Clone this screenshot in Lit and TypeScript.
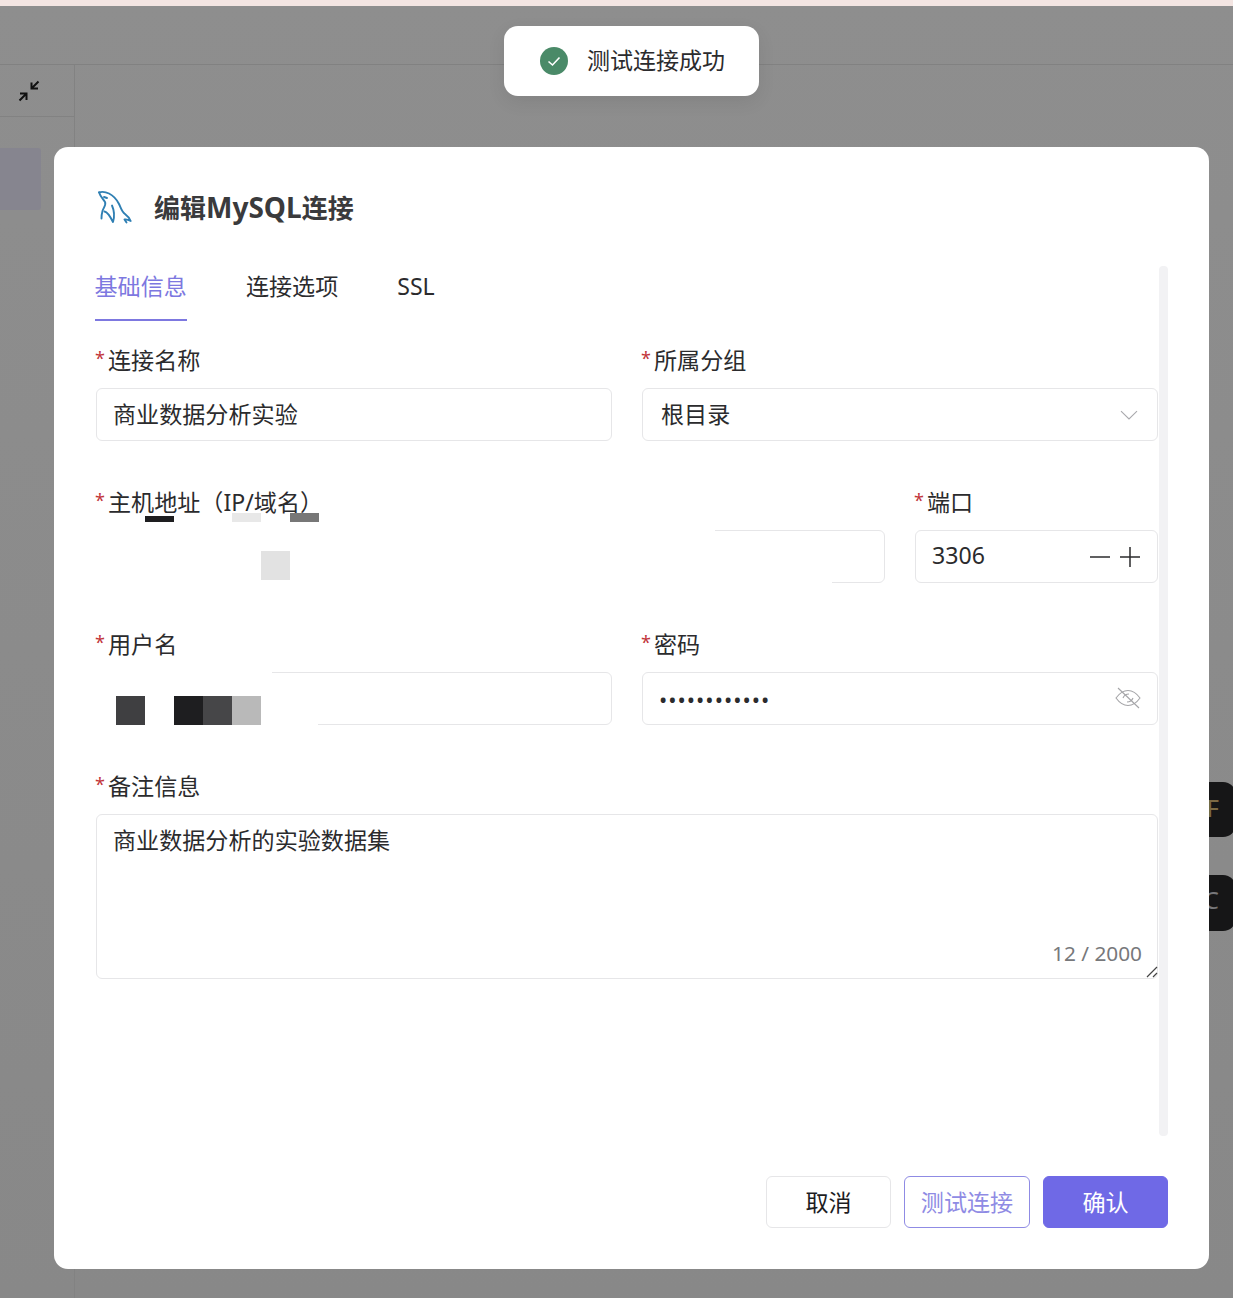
import { LitElement, html, css, svg } from 'lit';
import { customElement } from 'lit/decorators.js';

type Block = { x: number; y: number; w: number; h: number; c: string };

// mosaic over the masked host / user values, coordinates relative to the field
const hostBlocks: Block[] = [
  { x: -2, y: 40, w: 621, h: 56, c: '#fff' },
  { x: 619, y: 60, w: 117, h: 36, c: '#fff' },
  { x: 49, y: 28, w: 29, h: 6, c: '#1e1e20' },
  { x: 136, y: 25, w: 29, h: 9, c: '#e8e8e8' },
  { x: 194, y: 25, w: 29, h: 9, c: '#777' },
  { x: 165, y: 63, w: 29, h: 29, c: '#e2e2e2' },
];
const userBlocks: Block[] = [
  { x: -2, y: 40, w: 178, h: 56, c: '#fff' },
  { x: 176, y: 60, w: 46, h: 36, c: '#fff' },
  { x: 20, y: 66, w: 29, h: 29, c: '#3f3f41' },
  { x: 78, y: 66, w: 29, h: 29, c: '#1e1e20' },
  { x: 107, y: 66, w: 29, h: 29, c: '#464648' },
  { x: 136, y: 66, w: 29, h: 29, c: '#b9b9b9' },
];

const mosaic = (blocks: Block[]) =>
  blocks.map(
    (b) => html`<i class="px" style="left:${b.x}px;top:${b.y}px;width:${b.w}px;height:${b.h}px;background:${b.c}"></i>`
  );

const collapseIcon = svg`<svg class="collapse" viewBox="0 0 22 22" fill="none" stroke="#111" stroke-width="2"><path d="M20.5 1.5 13.5 8.5M13.5 2.5V8.5H20"/><path d="M1.5 20.5 8.5 13.5M2 13.5H8.5V20"/></svg>`;

const dolphin = svg`<svg class="dolphin" viewBox="0 0 36 36" fill="none" stroke="#2f7fb3" stroke-width="1.9" stroke-linecap="round" stroke-linejoin="round">
  <path d="M2 3.3C5 2.500 9 3 12 4.500C17 7 20 11 22 15C24 19 25 23 28 25C30 26.500 32 28 33.700 32C31 30.500 29.500 30 27.500 30.500L29.500 33.500"/>
  <path d="M2 3.300C3 7 6 10 8 13C9.500 16 6.500 18.500 5.500 22C4.800 24.500 4.500 27 4.500 29.500"/>
  <path d="M7.500 22.500C10 23 12.500 26 16 33C17.500 28 17 21 15 16.500"/>
  <path d="M7 8 10 9"/>
</svg>`;

const chevron = svg`<svg class="chevron" viewBox="0 0 18 10" fill="none" stroke="#a9a9ad" stroke-width="1.1"><path d="M1 1.2 9 9 17 1.2"/></svg>`;

const eyeOff = svg`<svg class="eye" viewBox="0 0 26 22" fill="none" stroke="#a5a5a8" stroke-width="1.1"><path d="M1 11C5 5.500 9 3.500 13 3.500S21 5.500 25 11C21 16.500 17 18.500 13 18.500S5 16.500 1 11Z"/><path d="M8 11C9 8.500 11 7 14 7M18 11C17 13.500 15 15 12 15"/><path d="M3 1 24 21"/></svg>`;

const check = svg`<svg class="check" viewBox="0 0 28 28"><circle cx="14" cy="14" r="14" fill="#4a8a68"/><path d="M8.500 14.500 12.500 18 19.500 10.500" fill="none" stroke="#fff" stroke-width="1.6"/></svg>`;

const grip = svg`<svg class="grip" viewBox="0 0 12 12" fill="none" stroke="#444" stroke-width="1.2"><path d="M1 11 11 1M7 11 11 7"/></svg>`;

@customElement('app-root')
export class AppRoot extends LitElement {
  static styles = css`
    :host {
      display: block;
      position: relative;
      height: 1298px;
      overflow: hidden;
      background: linear-gradient(#8e8e8e, #888888);
      font-family: 'Noto Sans', 'Noto Sans CJK SC', sans-serif;
      color: #2b2b2d;
    }

    /* page behind the dialog */
    .strip { height: 6px; background: #f3e5e2; }
    .topbar { height: 58px; border-bottom: 1px solid #818181; box-sizing: content-box; }
    .side { width: 74px; height: 1233px; border-right: 1px solid #828282; }
    .side-head {
      height: 51px;
      border-bottom: 1px solid #828282;
      display: flex;
      align-items: center;
      padding-left: 18px;
    }
    .collapse { width: 22px; height: 22px; }
    .side-item {
      width: 41px;
      height: 62px;
      margin-top: 31px;
      background: #86858f;
      border-radius: 0 3px 3px 0;
    }
    .edge {
      position: absolute;
      left: 1190px;
      width: 46px;
      height: 55px;
      background: #161617;
      border-radius: 13px;
      display: flex;
      align-items: center;
      justify-content: flex-end;
      padding: 0 17px 5px 0;
      box-sizing: border-box;
      font-size: 24px;
    }
    .edge.f { top: 782px; color: #7d6a45; }
    .edge.c { top: 875px; height: 56px; color: #77777a; padding-bottom: 8px; }

    /* toast */
    .toast {
      position: absolute;
      left: 504px;
      top: 26px;
      width: 255px;
      height: 70px;
      box-sizing: border-box;
      padding-left: 36px;
      display: flex;
      align-items: center;
      gap: 19px;
      background: #fff;
      border-radius: 14px;
      box-shadow: 0 6px 18px rgba(0, 0, 0, 0.08);
      font-size: 23px;
      z-index: 2;
    }
    .toast span { padding-bottom: 4px; }
    .check { width: 28px; height: 28px; }

    /* dialog */
    .dialog {
      position: absolute;
      left: 54px;
      top: 147px;
      width: 1155px;
      height: 1122px;
      box-sizing: border-box;
      padding: 40px 41px 41px;
      background: #fff;
      border-radius: 14px;
      display: flex;
      flex-direction: column;
    }
    .head {
      height: 40px;
      margin-bottom: 39px;
      display: flex;
      align-items: center;
      gap: 21px;
      padding-left: 2px;
      font-size: 26px;
      font-weight: 700;
      color: #3a3a3c;
    }
    .head span { padding-bottom: 1px; }
    .head em { font-style: normal; font-size: 28px; }
    .dolphin { width: 36px; height: 36px; }

    .body { position: relative; flex: 1; min-height: 0; }
    .track {
      position: absolute;
      right: 0;
      top: 0;
      bottom: 0;
      width: 9px;
      background: #f2f2f4;
      border-radius: 4px;
    }

    .tabs { display: flex; gap: 59px; height: 55px; font-size: 23.1px; margin-left: -0.5px; }
    .tab { padding-top: 5px; line-height: 30px; box-sizing: border-box; }
    .tab.on { color: #7d78e0; border-bottom: 2px solid #7d78e0; }

    .form {
      width: 1062px;
      margin: 25px 0 0 1px;
      display: flex;
      flex-direction: column;
      gap: 47px;
    }
    .row { display: grid; grid-template-columns: 1fr 1fr; gap: 30px; }
    .row.port { grid-template-columns: 1fr 243px; }
    .field { position: relative; min-width: 0; }
    label {
      display: flex;
      height: 30px;
      margin-bottom: 12px;
      line-height: 28px;
      font-size: 23.1px;
      margin-left: -1px;
    }
    label b {
      width: 13px;
      font-weight: 400;
      font-size: 18px;
      line-height: 25px;
      color: #c2353a;
    }
    .px { position: absolute; display: block; }

    .box {
      height: 53px;
      box-sizing: border-box;
      border: 1px solid #e6e6e8;
      border-radius: 6px;
      background: #fff;
      display: flex;
      align-items: center;
      padding: 0 16px;
      font-size: 23.1px;
      color: #2b2b2d;
      gap: 8px;
    }
    .box input {
      flex: 1;
      min-width: 0;
      border: 0;
      outline: 0;
      padding: 0 0 3px;
      background: none;
      font: inherit;
      color: inherit;
    }
    .box input[type='password'] { letter-spacing: 1px; font-size: 22px; padding: 0; }
    .select { padding: 0 19px 0 18px; justify-content: space-between; }
    .select span { padding-bottom: 3px; }
    .chevron { width: 18px; height: 10px; }
    .eye { width: 26px; height: 22px; margin: -2px 0 0; }
    .step { display: flex; gap: 10px; margin-right: 1px; }
    .step svg { width: 20px; height: 20px; }

    .area { position: relative; height: 165px; }
    textarea {
      display: block;
      width: 100%;
      height: 165px;
      box-sizing: border-box;
      padding: 7px 16px;
      border: 1px solid #e6e6e8;
      border-radius: 6px;
      outline: 0;
      background: #fff;
      resize: none;
      font: inherit;
      font-size: 23.1px;
      line-height: 36px;
      color: #2b2b2d;
    }
    .count {
      position: absolute;
      right: 16px;
      bottom: 11px;
      font-size: 20.8px;
      line-height: 30px;
      color: #77787b;
    }
    .grip { position: absolute; right: 0; bottom: 1px; width: 12px; height: 12px; }

    .foot { margin-top: 40px; display: flex; justify-content: flex-end; gap: 13px; }
    .btn {
      width: 125px;
      height: 52px;
      box-sizing: border-box;
      border: 1px solid #e6e6e8;
      border-radius: 6px;
      background: #fff;
      font: inherit;
      font-size: 23.1px;
      color: #1d1d1f;
      padding: 0 0 3px;
    }
    .btn.test { width: 126px; border: 1.5px solid #8f8be4; color: #8f8be4; }
    .btn.ok { border-color: #6f69e6; background: #6f69e6; color: #fff; }
  `;

  render() {
    return html`
      <div class="strip"></div>
      <div class="topbar"></div>
      <div class="side">
        <div class="side-head">${collapseIcon}</div>
        <div class="side-item"></div>
      </div>
      <div class="edge f">F</div>
      <div class="edge c">C</div>

      <div class="toast">${check}<span>测试连接成功</span></div>

      <div class="dialog">
        <div class="head">${dolphin}<span>编辑<em>MySQL</em>连接</span></div>
        <div class="body">
          <div class="track"></div>
          <div class="tabs">
            <div class="tab on">基础信息</div>
            <div class="tab">连接选项</div>
            <div class="tab">SSL</div>
          </div>
          <div class="form">
            <div class="row">
              <div class="field">
                <label><b>*</b>连接名称</label>
                <div class="box"><input .value=${'商业数据分析实验'} /></div>
              </div>
              <div class="field">
                <label><b>*</b>所属分组</label>
                <div class="box select"><span>根目录</span>${chevron}</div>
              </div>
            </div>
            <div class="row port">
              <div class="field">
                <label><b>*</b>主机地址（IP/域名）</label>
                <div class="box"></div>
                ${mosaic(hostBlocks)}
              </div>
              <div class="field">
                <label><b>*</b>端口</label>
                <div class="box">
                  <input .value=${'3306'} />
                  <span class="step">
                    <svg viewBox="0 0 20 20" stroke="#2b2b2d" stroke-width="1.500"><path d="M0 10H20" /></svg>
                    <svg viewBox="0 0 20 20" stroke="#2b2b2d" stroke-width="1.500"><path d="M0 10H20M10 0V20" /></svg>
                  </span>
                </div>
              </div>
            </div>
            <div class="row">
              <div class="field">
                <label><b>*</b>用户名</label>
                <div class="box"></div>
                ${mosaic(userBlocks)}
              </div>
              <div class="field">
                <label><b>*</b>密码</label>
                <div class="box"><input type="password" .value=${'••••••••••••'} />${eyeOff}</div>
              </div>
            </div>
            <div class="field">
              <label><b>*</b>备注信息</label>
              <div class="area">
                <textarea .value=${'商业数据分析的实验数据集'}></textarea>
                <span class="count">12 / 2000</span>
                ${grip}
              </div>
            </div>
          </div>
        </div>
        <div class="foot">
          <button class="btn">取消</button>
          <button class="btn test">测试连接</button>
          <button class="btn ok">确认</button>
        </div>
      </div>
    `;
  }
}
